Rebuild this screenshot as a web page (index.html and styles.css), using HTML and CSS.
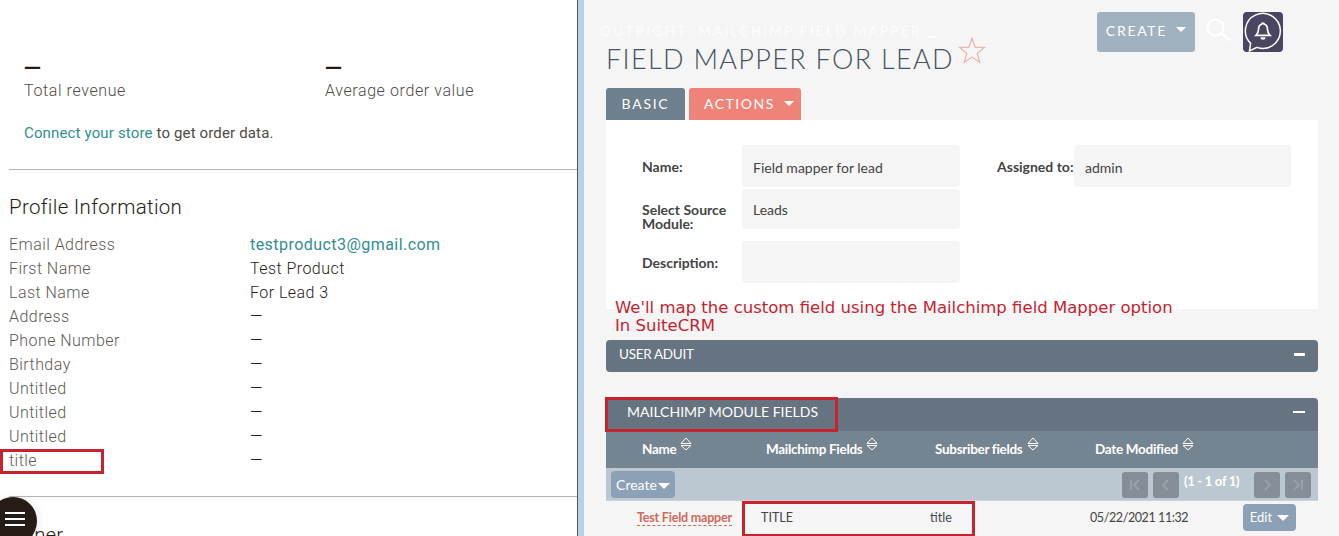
FILE: index.html
```html
<!DOCTYPE html>
<html lang="en">
<head>
<meta charset="utf-8">
<title>Field Mapper for Lead</title>
<link rel="stylesheet" href="styles.css">
</head>
<body>
<div class="page">
  <section class="left">
    <div class="stats">
      <div class="stat"><div class="stat-dash">—</div><div class="stat-label">Total revenue</div></div>
      <div class="stat"><div class="stat-dash">—</div><div class="stat-label">Average order value</div></div>
    </div>
    <p class="connect"><a class="teal">Connect your store</a> to get order data.</p>
    <hr class="rule">
    <h2 class="heading">Profile Information</h2>
    <div class="profile">
      <div class="prow"><span class="plabel">Email Address</span><span class="teal">testproduct3@gmail.com</span></div>
      <div class="prow"><span class="plabel">First Name</span><span>Test Product</span></div>
      <div class="prow"><span class="plabel">Last Name</span><span>For Lead 3</span></div>
      <div class="prow"><span class="plabel">Address</span><span>—</span></div>
      <div class="prow"><span class="plabel">Phone Number</span><span>—</span></div>
      <div class="prow"><span class="plabel">Birthday</span><span>—</span></div>
      <div class="prow"><span class="plabel">Untitled</span><span>—</span></div>
      <div class="prow"><span class="plabel">Untitled</span><span>—</span></div>
      <div class="prow"><span class="plabel">Untitled</span><span>—</span></div>
      <div class="prow prow-title"><span class="plabel">title</span><span>—</span><i class="mark mark-title"></i></div>
    </div>
    <hr class="rule rule-2">
    <h2 class="heading heading-2">Owner</h2>
    <button class="fab" aria-label="Menu"><span></span><span></span><span></span></button>
  </section>
  <div class="splitter"></div>
  <section class="right">
    <header class="top">
      <div class="titles">
        <div class="module">OUTRIGHT: MAILCHIMP FIELD MAPPER <span class="module-caret"></span></div>
        <div class="title-row">
          <h1 class="title">FIELD MAPPER FOR LEAD</h1>
          <svg class="star" viewBox="0 0 28 28" width="28" height="28"><path d="M14 1.500l3.200 8.600 9.300.4-7.300 5.700 2.500 9-7.700-5.100-7.700 5.100 2.500-9-7.300-5.700 9.300-.4z" fill="none" stroke="#e9b0a8" stroke-width="1.200"/></svg>
        </div>
      </div>
      <div class="actions">
        <button class="create">CREATE<span class="caret caret-w"></span></button>
        <svg class="search" viewBox="0 0 26 26" width="26" height="26"><circle cx="10.500" cy="10.500" r="8" fill="none" stroke="#fff" stroke-width="2.200"/><path d="M16.500 16.500l7.500 6" stroke="#fff" stroke-width="3" stroke-linecap="round"/></svg>
        <div class="bell">
          <svg viewBox="0 0 40 40" width="40" height="40"><path d="M7.600 31.400A17.500 17.500 0 1 1 14 35.400L6.500 39z" fill="none" stroke="#fff" stroke-width="1.500"/><path d="M20 11a1.300 1.300 0 0 1 1.300 1.300c2.500.8 3.200 3 3.200 5.200 0 2.700.8 4.200 2.500 5.800h-14c1.700-1.600 2.500-3.100 2.500-5.800 0-2.200.7-4.400 3.200-5.200A1.300 1.300 0 0 1 20 11z" fill="none" stroke="#fff" stroke-width="1.700"/><path d="M17.500 25.300h5a2.500 2.500 0 0 1-5 0z" fill="#fff"/></svg>
        </div>
      </div>
    </header>
    <nav class="tabs">
      <div class="tab tab-basic">BASIC</div>
      <div class="tab tab-actions">ACTIONS<span class="caret caret-w"></span></div>
    </nav>
    <div class="panel">
      <div class="form">
        <div class="flabel">Name:</div><div class="fvalue">Field mapper for lead</div>
        <div class="flabel flabel-2">Assigned to:</div><div class="fvalue fvalue-2">admin</div>
        <div class="flabel flabel-source">Select Source Module:</div><div class="fvalue fvalue-top">Leads</div>
        <div class="flabel flabel-desc">Description:</div><div class="fvalue fvalue-desc"></div>
      </div>
      <p class="note">We'll map the custom field using the Mailchimp field Mapper option<br>In SuiteCRM</p>
    </div>
    <div class="bar bar-audit"><span>USER ADUIT</span><i class="minus"></i></div>
    <div class="bar bar-fields"><span>MAILCHIMP MODULE FIELDS</span><i class="minus minus-thin"></i><i class="mark mark-fields"></i></div>
    <div class="cols grid">
      <div class="col col-name">Name<svg class="sort" viewBox="0 0 12 14" width="12" height="14"><path d="M6 1l5 5.500H1zM1 8.500h10L6 13z" fill="none" stroke="#fff" stroke-width="1"/></svg></div>
      <div class="col">Mailchimp Fields<svg class="sort" viewBox="0 0 12 14" width="12" height="14"><path d="M6 1l5 5.500H1zM1 8.500h10L6 13z" fill="none" stroke="#fff" stroke-width="1"/></svg></div>
      <div class="col">Subsriber fields<svg class="sort" viewBox="0 0 12 14" width="12" height="14"><path d="M6 1l5 5.500H1zM1 8.500h10L6 13z" fill="none" stroke="#fff" stroke-width="1"/></svg></div>
      <div class="col">Date Modified<svg class="sort" viewBox="0 0 12 14" width="12" height="14"><path d="M6 1l5 5.500H1zM1 8.500h10L6 13z" fill="none" stroke="#fff" stroke-width="1"/></svg></div>
    </div>
    <div class="pager">
      <button class="btn-create">Create<span class="caret caret-b"></span></button>
      <div class="pages">
        <span class="pg"><svg viewBox="0 0 26 26" width="26" height="26"><path d="M9 8v10M17 8l-5 5 5 5" fill="none" stroke="#97a2ac" stroke-width="2"/></svg></span>
        <span class="pg"><svg viewBox="0 0 26 26" width="26" height="26"><path d="M15 8l-5 5 5 5" fill="none" stroke="#97a2ac" stroke-width="2"/></svg></span>
        <span class="pg-text">(1 - 1 of 1)</span>
        <span class="pg"><svg viewBox="0 0 26 26" width="26" height="26"><path d="M11 8l5 5-5 5" fill="none" stroke="#97a2ac" stroke-width="2"/></svg></span>
        <span class="pg"><svg viewBox="0 0 26 26" width="26" height="26"><path d="M9 8l5 5-5 5M17 8v10" fill="none" stroke="#97a2ac" stroke-width="2"/></svg></span>
      </div>
    </div>
    <div class="row grid">
      <div class="cell cell-name"><a class="link">Test Field mapper</a></div>
      <div class="cell">TITLE</div>
      <div class="cell">title</div>
      <div class="cell cell-date">05/22/2021 11:32</div>
      <div class="cell"><button class="btn-edit">Edit<span class="caret caret-b caret-edit"></span></button></div>
      <i class="mark mark-row"></i>
    </div>
  </section>
</div>
</body>
</html>
```
FILE: styles.css
```css
* { box-sizing: border-box; }
html, body { margin: 0; height: 536px; overflow: hidden; background: #fff; }
button { border: 0; padding: 0; font: inherit; }
.page { display: flex; height: 536px; overflow: hidden; }

/* left pane */
.left { position: relative; width: 577px; flex: none; height: 536px; overflow: hidden; background: #fff; font: 300 16px/24px Roboto, sans-serif; letter-spacing: .45px; color: #241c15; padding-top: 56px; }
.stats { display: flex; padding-left: 24px; }
.stat { width: 301px; flex: none; }
.stat-dash { font: 700 17px/22px "DejaVu Sans", sans-serif; letter-spacing: 0; }
.stat-label { color: #4f4a45; line-height: 24px; padding-top: 1px; letter-spacing: .6px; }
.connect { margin: 18px 0 0; padding-left: 24px; font-size: 15px; line-height: 24px; font-weight: 400; letter-spacing: .15px; color: #4f4a45; }
.teal { color: #2f8f92; font-weight: 400; }
.rule { margin: 24px 0 0 9px; border: 0; height: 1px; background: #b5b5b5; }
.rule-2 { margin-top: 23px; }
.heading { margin: 23px 0 0 9px; font: 300 20.500px/28px Roboto, sans-serif; letter-spacing: .3px; color: #241c15; }
.heading-2 { margin: 24px 0 0 5px; letter-spacing: 0; }
.profile { margin-top: 12px; padding-left: 9px; }
.prow { position: relative; display: flex; height: 24px; align-items: center; }
.plabel { width: 241px; color: #5e5954; }
.mark { position: absolute; border: 3px solid #c7222f; pointer-events: none; }
.mark-title { left: -9px; top: 0; width: 104px; height: 25px; }
.fab { position: absolute; left: -11px; top: 497px; width: 48px; height: 48px; border-radius: 50%; background: #241c15; display: flex; flex-direction: column; align-items: center; justify-content: flex-start; padding: 15px 0 0 4px; gap: 4px; box-shadow: 2px 0 10px rgba(0,0,0,.08); }
.fab span { display: block; width: 20px; height: 2px; background: #fff; }

/* splitter */
.splitter { width: 7px; flex: none; border-left: 1px solid #4e5763; background: #bccfe9; }

/* right pane */
.right { flex: 1; min-width: 0; background: #f5f5f5; padding: 12px 21px 0 22px; font-family: Lato, sans-serif; color: #333; }
.top { display: flex; justify-content: space-between; height: 76px; }
.titles { margin-left: -6px; padding-top: 10px; }
.module { height: 20px; font-size: 13.500px; line-height: 18px; letter-spacing: 2.300px; color: #fff; opacity: .85; white-space: nowrap; }
.module-caret { display: inline-block; width: 9px; height: 2px; background: #fff; vertical-align: -2px; }
.title-row { display: flex; align-items: flex-start; margin-left: 6px; }
.title { margin: 0; font: 300 27px/34px Lato, sans-serif; letter-spacing: 1.330px; color: #46525e; white-space: nowrap; }
.star { margin: -5px 0 0 4px; }
.actions { display: flex; align-items: flex-start; margin-right: 35px; }
.create { width: 98px; height: 40px; border-radius: 3px; background: #a0b2c0; color: #fff; font: 400 14px/38px Lato, sans-serif; letter-spacing: 1.700px; display: flex; justify-content: center; align-items: center; padding-bottom: 2px; }
.caret { display: inline-block; width: 0; height: 0; border-style: solid; border-color: #fff transparent transparent; }
.caret-w { border-width: 5px 5.500px 0; margin-left: 9px; vertical-align: 3px; }
.create .caret-w { margin-top: -4px; }
.caret-b { border-width: 6px 6.500px 0; margin: 0 0 0 1px; vertical-align: 1px; }
.caret-edit { margin-left: 5px; }
.search { margin: 5px 0 0 10px; }
.bell { width: 40px; height: 40px; margin-left: 12px; border-radius: 4px; background: #4a4560; }
.bell svg { display: block; }

.tabs { display: flex; gap: 4px; height: 32px; }
.tab { border-radius: 3px 3px 0 0; color: #fff; font-size: 14px; line-height: 32px; letter-spacing: 1.700px; text-align: center; }
.tab-basic { width: 79px; background: #6e7f8e; }
.tab-actions { width: 112px; padding-left: 15px; text-align: left; letter-spacing: 1.500px; background: #f08377; }

.panel { height: 189px; background: #fff; padding: 25px 27px 0 36px; }
.form { display: grid; grid-template-columns: 100px 218px 114px 217px; grid-template-rows: 42px 40px 52px; row-gap: 2px; font-size: 14px; }
.flabel { font-weight: 700; letter-spacing: 0; color: #444; line-height: 14px; padding-top: 15px; }
.flabel-2 { padding: 15px 0 0 37px; white-space: nowrap; }
.flabel-source { padding-top: 14px; }
.flabel-desc { grid-row: 3; grid-column: 1; padding-top: 25px; }
.fvalue { background: #f5f5f5; border-radius: 4px; padding: 0 11px; line-height: 46px; color: #444; }
.fvalue-top { grid-row: 2; grid-column: 2; line-height: 42px; }
.fvalue-desc { grid-row: 3; grid-column: 2; margin-top: 10px; height: 42px; }
.note { margin: 16px -27px 0 -27px; font: 400 16.500px/18px "DejaVu Sans", sans-serif; color: #c7222f; white-space: nowrap; }

.bar { position: relative; display: flex; justify-content: space-between; align-items: center; height: 32px; padding: 0 13px 4px; background: #667380; border-radius: 4px; color: #fff; font-size: 13.500px; letter-spacing: -.3px; }
.bar-audit { margin-top: 31px; }
.bar-fields { margin-top: 26px; height: 33px; padding-left: 21px; padding-bottom: 6px; border-radius: 4px 4px 0 0; font-size: 14px; letter-spacing: 0; }
.minus { width: 11px; height: 3px; background: #fff; }
.minus-thin { height: 2px; width: 12px; }
.mark-fields { left: -1px; top: -1px; width: 233px; height: 35px; }

.grid { display: grid; grid-template-columns: 155px 169px 160px 153px 75px; }
.cols { height: 37px; background: #748491; color: #fff; font-size: 13.500px; font-weight: 700; letter-spacing: -.3px; line-height: 36px; }
.col { padding-left: 5px; white-space: nowrap; }
.col-name { padding-left: 36px; }
.sort { margin-left: 4px; vertical-align: 3px; }

.pager { display: flex; justify-content: space-between; align-items: flex-start; height: 33px; padding: 3px 7px 0 5px; background: #bcc8d1; border-bottom: 1px solid #c9d2d9; }
.btn-create { width: 64px; height: 27px; border-radius: 4px; background: #8ca1b5; color: #fff; font: 400 14px/27px Lato, sans-serif; }
.pages { display: flex; align-items: flex-start; margin-top: 1px; }
.pg { width: 26px; height: 26px; margin-right: 5px; border-radius: 3px; background: #858e96; }
.pg svg { display: block; }
.pg-text { width: 69px; margin-right: 1px; padding-right: 10px; color: #fff; font-size: 13px; font-weight: 700; letter-spacing: -.3px; line-height: 19px; }
.pg:last-child { margin-right: 0; }

.row { position: relative; height: 35px; font-size: 12.500px; color: #444; line-height: 33px; }
.cell-name { padding-left: 31px; }
.link { color: #cf6a5c; font-weight: 700; letter-spacing: -.2px; border-bottom: 1px dashed #cf6a5c; }
.cell-date { letter-spacing: -.4px; }
.btn-edit { width: 53px; height: 27px; margin-top: 3px; border-radius: 4px; background: #8ca1b5; color: #fff; font: 400 13px/27px Lato, sans-serif; display: block; }
.mark-row { left: 136px; top: 0; width: 233px; height: 36px; }
```
